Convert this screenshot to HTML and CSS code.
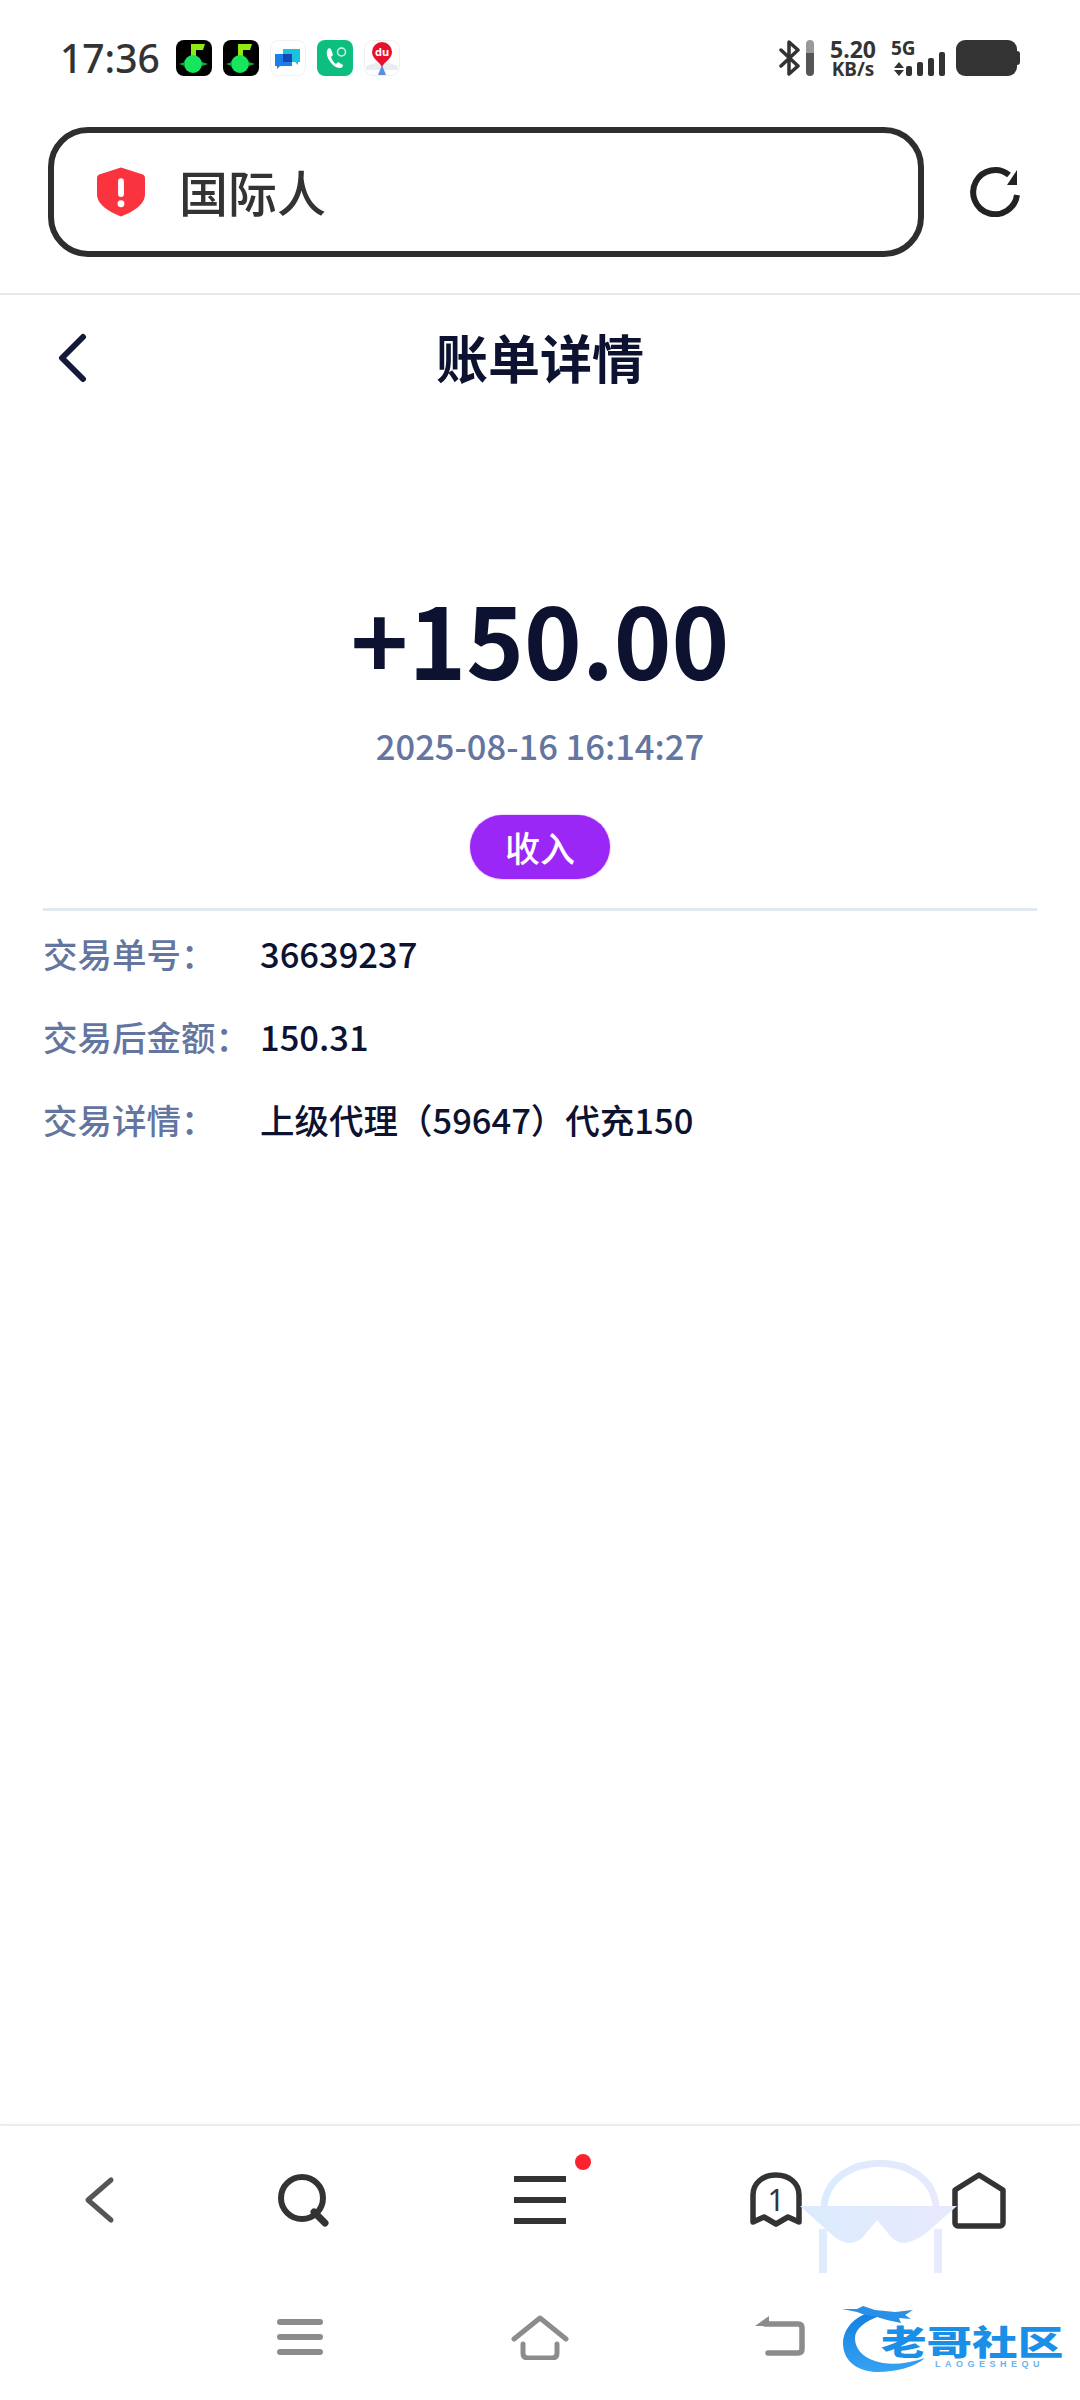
FILE: index.html
```html
<!DOCTYPE html>
<html lang="zh-CN">
<head>
    <meta charset="UTF-8">
    <meta name="viewport" content="width=device-width, initial-scale=1.0">
    <title>账单详情</title>
    <link rel="stylesheet" href="styles.css">
</head>
<body>
    <div class="page">
        <!-- Status bar -->
        <div class="status">
            <div class="status-left">
                <span class="time">17:36</span>
                <div class="app-icons">
                    <svg class="app-icon" viewBox="0 0 36 36"><rect width="36" height="36" rx="8" fill="#000"/><path d="M15 4h14l-2 6h-7v9h-5z" fill="#8eea12"/><circle cx="17" cy="24" r="9" fill="#17e55c"/><path d="M3 24l6-2v4zM32 24l-6-2v4z" fill="#14a84c"/></svg>
                    <svg class="app-icon" viewBox="0 0 36 36"><rect width="36" height="36" rx="8" fill="#000"/><path d="M15 4h14l-2 6h-7v9h-5z" fill="#8eea12"/><circle cx="17" cy="24" r="9" fill="#17e55c"/><path d="M3 24l6-2v4zM32 24l-6-2v4z" fill="#14a84c"/></svg>
                    <svg class="app-icon" viewBox="0 0 36 36"><rect x=".5" y=".5" width="35" height="35" rx="8" fill="#fff" stroke="#eef2f6"/><path d="M13 9h17v13h-2v3l-3-3H13z" fill="#19c3e0"/><path d="M5 14h17v12H10l-3 3v-3H5z" fill="#1a7fe8"/><rect x="13" y="14" width="9" height="8" fill="#1746b0"/></svg>
                    <svg class="app-icon" viewBox="0 0 36 36"><rect width="36" height="36" rx="8" fill="#0dbf7f"/><path d="M12 8c-3 2-3 7 0 12s7 8 11 8c2 0 3-2 3-3l-5-3-2 2c-2-1-4-4-5-7l2-2-2-6z" fill="#fff"/><circle cx="24.500" cy="12" r="4" fill="none" stroke="#d8f5ea" stroke-width="1.500"/></svg>
                    <svg class="app-icon" viewBox="0 0 36 36"><rect x=".5" y=".5" width="35" height="35" rx="8" fill="#fff" stroke="#f0f0f0"/><path d="M2 26l12-4 4 3 4-3 12 4v4H2z" fill="#e8edf2"/><path d="M14 35l4-10 4 10z" fill="#5b8de0"/><path d="M18 27c-2-5-10-8-10-15a10 10 0 0 1 20 0c0 7-8 10-10 15z" fill="#e8112d"/><text class="du" x="18" y="16">du</text></svg>
                </div>
            </div>
            <div class="status-right">
                <svg class="bt" viewBox="0 0 24 36"><path d="M3 10l17 16-9 8V2l9 8L3 26" fill="none" stroke="#333" stroke-width="3.500" stroke-linecap="round" stroke-linejoin="round"/></svg>
                <div class="bt-level"></div>
                <div class="speed">
                    <span class="speed-num">5.20</span>
                    <span class="speed-unit">KB/s</span>
                </div>
                <svg class="net" viewBox="0 0 54 36"><text class="net-label" x="0" y="15">5G</text><path d="M8 22l5 6H3zM8 36l5-6H3z" fill="#333"/><rect x="15" y="26" width="6" height="10" rx="2" fill="#333"/><rect x="26" y="22" width="6" height="14" rx="2" fill="#333"/><rect x="37" y="18" width="6" height="18" rx="2" fill="#333"/><rect x="48" y="12" width="6" height="24" rx="2" fill="#333"/></svg>
                <div class="battery"></div>
            </div>
        </div>

        <!-- Browser address row -->
        <div class="addr-row">
            <div class="addr-bar">
                <svg class="shield" viewBox="0 0 49 50"><path d="M24.500 0L46 7c2 .7 3 2 3 4v16c0 11-12 18-24.500 23C12 45 0 38 0 27V11c0-2 1-3.300 3-4z" fill="#f9343f"/><rect x="21.500" y="11" width="6" height="19" rx="3" fill="#fff"/><circle cx="24.500" cy="37" r="3.500" fill="#fff"/></svg>
                <span class="addr-text">国际人</span>
            </div>
            <svg class="reload" viewBox="0 0 50 52"><path d="M47 30A22 22 0 1 1 39 10" fill="none" stroke="#222" stroke-width="6"/><path d="M47 5v15H37z" fill="#222"/></svg>
        </div>

        <!-- Page header -->
        <div class="header">
            <svg class="back" viewBox="0 0 30 50"><path d="M26 4L5 25l21 21" fill="none" stroke="#14193a" stroke-width="6" stroke-linecap="round" stroke-linejoin="round"/></svg>
            <h1>账单详情</h1>
        </div>

        <main class="main">
            <div class="summary">
                <div class="amount">+150.00</div>
                <div class="date">2025-08-16 16:14:27</div>
                <div class="tag">收入</div>
            </div>
            <div class="rows">
                <div class="row"><span class="row-label">交易单号：</span><span class="row-value">36639237</span></div>
                <div class="row"><span class="row-label">交易后金额：</span><span class="row-value">150.31</span></div>
                <div class="row"><span class="row-label">交易详情：</span><span class="row-value">上级代理（59647）代充150</span></div>
            </div>
        </main>

        <!-- Browser toolbar -->
        <div class="toolbar">
            <div class="tool"><svg class="tool-back" viewBox="0 0 32 48"><path d="M28 4L5 24l23 20" fill="none" stroke="#555" stroke-width="5" stroke-linecap="round" stroke-linejoin="round"/></svg></div>
            <div class="tool"><svg class="tool-search" viewBox="0 0 54 54"><circle cx="25" cy="25" r="21" fill="none" stroke="#333" stroke-width="6"/><path d="M37 39l11 11" stroke="#333" stroke-width="7" stroke-linecap="round"/></svg></div>
            <div class="tool">
                <div class="menu-wrap">
                    <svg class="tool-menu" viewBox="0 0 52 48"><path d="M0 3h52M0 24h52M0 45h52" stroke="#333" stroke-width="6"/></svg>
                    <span class="dot"></span>
                </div>
            </div>
            <div class="tool"><svg class="tool-tabs" viewBox="0 0 54 56"><path d="M4 50V23C4 11 14 3 27 3s23 8 23 20v27l-11-5-12 7-12-7z" fill="none" stroke="#333" stroke-width="5.500" stroke-linejoin="round"/><text class="tabs-num" x="27" y="39">1</text></svg></div>
            <div class="tool"><svg class="tool-home" viewBox="0 0 54 58"><path d="M27 4l24 15v33a3 3 0 0 1-3 3H6a3 3 0 0 1-3-3V19z" fill="none" stroke="#333" stroke-width="5.500" stroke-linejoin="round"/></svg></div>
        </div>

        <!-- System navigation -->
        <div class="sysnav">
            <div class="sys"><svg class="sys-menu" viewBox="0 0 46 36"><path d="M3 3h40M3 18h40M3 33h40" stroke="#8c8c8c" stroke-width="6" stroke-linecap="round"/></svg></div>
            <div class="sys"><svg class="sys-home" viewBox="0 0 58 46"><path d="M3 25L29 4l26 21" fill="none" stroke="#8c8c8c" stroke-width="5" stroke-linecap="round" stroke-linejoin="round"/><path d="M12 30v9q0 5 5 5h24q5 0 5-5v-9" fill="none" stroke="#8c8c8c" stroke-width="5" stroke-linecap="round"/></svg></div>
            <div class="sys"><svg class="sys-back" viewBox="0 0 50 42"><path d="M10 9h33q4 0 4 4v21q0 4-4 4H13" fill="none" stroke="#8c8c8c" stroke-width="5.500" stroke-linecap="round"/><path d="M0 11L14 1v10z" fill="#8c8c8c"/></svg></div>
        </div>

        <!-- Watermark over the bars -->
        <svg class="mark" viewBox="0 0 158 114">
            <defs>
                <linearGradient id="markFill" x1="0" x2="1"><stop offset="0" stop-color="#dbebfe"/><stop offset="1" stop-color="#e8e9fd"/></linearGradient>
            </defs>
            <path d="M24 47C30 -10 130 -10 136 47" fill="none" stroke="url(#markFill)" stroke-width="7"/>
            <path d="M0 47H157L125 75Q115 82 105 84Q97 84 91 78L77 61L63 78Q57 84 48 84Q38 82 30 74z" fill="url(#markFill)"/>
            <rect x="19" y="70" width="8" height="44" fill="#dfecfe"/>
            <rect x="134" y="70" width="8" height="44" fill="#e8eafd"/>
        </svg>

        <div class="logo">
            <svg class="dragon" viewBox="0 0 235 85">
                <defs>
                    <linearGradient id="dragonFill" x1="0" x2="0" y1="0" y2="1"><stop offset="0" stop-color="#1580e0"/><stop offset="1" stop-color="#35a2f2"/></linearGradient>
                </defs>
                <path d="M30 19C14 26 8 38 8 48C8 68 25 77 43 77C60 77 80 72 90 63C75 68 60 70 48 68C30 65 20 55 20 43C20 34 30 26 45 21z" fill="url(#dragonFill)"/>
                <path d="M7 14L22 14L28 11L40 15L60 17L78 15L70 20L76 24L64 23L66 28L52 25L42 22L30 20L22 17z" fill="#2a8fe6"/>
            </svg>
            <div class="logo-text">老哥社区</div>
            <div class="logo-sub">LAOGESHEQU</div>
        </div>
    </div>
</body>
</html>
```

FILE: styles.css
```css
/* General Styles */
* {
    box-sizing: border-box;
}

body {
    margin: 0;
    background: #fff;
    font-family: "Noto Sans CJK SC", "Noto Sans", sans-serif;
    color: #0c1230;
}

.page {
    position: relative;
    width: 1080px;
    height: 2400px;
    display: flex;
    flex-direction: column;
    overflow: hidden;
}

/* Status bar */
.status {
    height: 116px;
    flex: none;
    display: flex;
    justify-content: space-between;
    align-items: center;
    padding: 0 60px 0 60px;
}

.status-left {
    display: flex;
    align-items: center;
    gap: 16px;
}

.time {
    font-family: "Noto Sans", sans-serif;
    font-size: 39px;
    font-weight: 500;
    color: #333;
    line-height: 44px;
}

.app-icons {
    display: flex;
    gap: 11px;
}

.app-icon {
    width: 36px;
    height: 36px;
}

.du {
    font-family: "Noto Sans", sans-serif;
    font-size: 11px;
    font-weight: 700;
    fill: #fff;
    text-anchor: middle;
}

.status-right {
    display: flex;
    align-items: center;
}

.bt {
    width: 24px;
    height: 36px;
}

.bt-level {
    width: 8px;
    height: 36px;
    margin-left: 4px;
    border-radius: 4px;
    background: linear-gradient(#999 0 36%, #555 36%);
}

.speed {
    width: 46px;
    margin-left: 16px;
    display: flex;
    flex-direction: column;
    align-items: center;
    font-family: "Noto Sans", sans-serif;
    font-weight: 700;
    color: #333;
}

.speed-num {
    font-size: 23px;
    line-height: 22px;
}

.speed-unit {
    font-size: 19px;
    line-height: 18px;
}

.net {
    width: 54px;
    height: 36px;
    margin-left: 15px;
    overflow: visible;
}

.net-label {
    font-family: "Noto Sans", sans-serif;
    font-size: 19px;
    font-weight: 700;
    fill: #333;
}

.battery {
    position: relative;
    width: 61px;
    height: 36px;
    margin-left: 11px;
    margin-right: 3px;
    border-radius: 9px;
    background: #333;
}

.battery::after {
    content: "";
    position: absolute;
    right: -3px;
    top: 11px;
    width: 3px;
    height: 14px;
    border-radius: 0 3px 3px 0;
    background: #333;
}

/* Address row */
.addr-row {
    height: 179px;
    flex: none;
    display: flex;
    align-items: flex-start;
    padding: 11px 0 0 48px;
    border-bottom: 2px solid #e8e8e8;
}

.addr-bar {
    width: 876px;
    height: 130px;
    display: flex;
    align-items: center;
    padding-left: 43px;
    border: 6px solid #2e2e2e;
    border-radius: 40px;
}

.shield {
    width: 48px;
    height: 50px;
}

.addr-text {
    margin-left: 34px;
    margin-bottom: 3px;
    font-size: 49px;
    font-weight: 500;
    color: #333;
}

.reload {
    width: 50px;
    height: 52px;
    margin: 38px 0 0 46px;
}

/* Page header */
.header {
    position: relative;
    height: 130px;
    flex: none;
    display: flex;
    justify-content: center;
    align-items: center;
    padding-bottom: 6px;
}

.back {
    position: absolute;
    left: 57px;
    top: 38px;
    width: 30px;
    height: 50px;
}

h1 {
    margin: 0;
    font-size: 52px;
    font-weight: 700;
    line-height: 70px;
}

/* Summary */
.main {
    flex: 1;
}

.summary {
    display: flex;
    flex-direction: column;
    align-items: center;
    margin: 0 43px;
    padding: 152px 0 29px;
    border-bottom: 3px solid #e2e8f0;
}

.amount {
    font-size: 98px;
    font-weight: 700;
    line-height: 120px;
}

.date {
    margin-top: 23px;
    font-size: 34.500px;
    font-weight: 500;
    line-height: 50px;
    color: #64759f;
}

.tag {
    width: 140px;
    height: 64px;
    margin-top: 45px;
    border-radius: 32px;
    background: #9b27f7;
    box-shadow: 0 0 0 1px #f0dcfd;
    color: #fff;
    font-size: 35px;
    font-weight: 500;
    line-height: 64px;
    text-align: center;
}

/* Detail rows */
.rows {
    padding: 0 43px;
}

.row {
    height: 83px;
    display: flex;
    align-items: center;
    font-size: 34.500px;
    font-weight: 500;
}

.row-label {
    width: 217px;
    flex: none;
    color: #64759f;
}

.row-value {
    color: #0c1230;
}

/* Toolbar */
.toolbar {
    height: 150px;
    flex: none;
    display: grid;
    grid-template-columns: 198px 212px 260px 212px 194px;
    border-top: 2px solid #ededed;
    box-shadow: 0 -2px 3px rgba(0, 0, 0, 0.02);
}

.tool {
    display: flex;
    justify-content: center;
    align-items: center;
}

.tool-back {
    width: 32px;
    height: 48px;
}

.tool-search {
    width: 54px;
    height: 54px;
}

.menu-wrap {
    position: relative;
    display: flex;
}

.tool-menu {
    width: 52px;
    height: 48px;
}

.dot {
    position: absolute;
    top: -22px;
    right: -25px;
    width: 16px;
    height: 16px;
    border-radius: 50%;
    background: #fb2230;
}

.tool-tabs {
    width: 54px;
    height: 56px;
}

.tabs-num {
    font-family: "Noto Sans", sans-serif;
    font-size: 30px;
    fill: #333;
    text-anchor: middle;
}

.tool-home {
    width: 54px;
    height: 58px;
}

/* System nav */
.sysnav {
    height: 126px;
    flex: none;
    display: grid;
    grid-template-columns: repeat(3, 240px);
    padding: 40px 0 0 180px;
}

.sys {
    display: flex;
    justify-content: center;
    align-items: flex-start;
}

.sys-menu {
    width: 46px;
    height: 36px;
    margin-top: 5px;
}

.sys-home {
    width: 58px;
    height: 46px;
}

.sys-back {
    width: 50px;
    height: 42px;
    margin-top: 1px;
}

/* Overlays */
.mark {
    position: absolute;
    left: 800px;
    top: 2159px;
    width: 158px;
    height: 114px;
}

.logo {
    position: absolute;
    left: 835px;
    top: 2295px;
    width: 235px;
    height: 85px;
}

.dragon {
    position: absolute;
    left: 0;
    top: 0;
    width: 235px;
    height: 85px;
}

.logo-text {
    position: absolute;
    left: 46px;
    top: 26px;
    width: 136px;
    transform: scaleX(1.34);
    transform-origin: left center;
    font-size: 34px;
    font-weight: 900;
    line-height: 40px;
    color: #1a8fe8;
    white-space: nowrap;
}

.logo-sub {
    position: absolute;
    left: 100px;
    top: 64px;
    font-family: "Liberation Sans", sans-serif;
    font-size: 9px;
    font-weight: 700;
    line-height: 10px;
    letter-spacing: 4.500px;
    color: #6fb2ea;
}
```
